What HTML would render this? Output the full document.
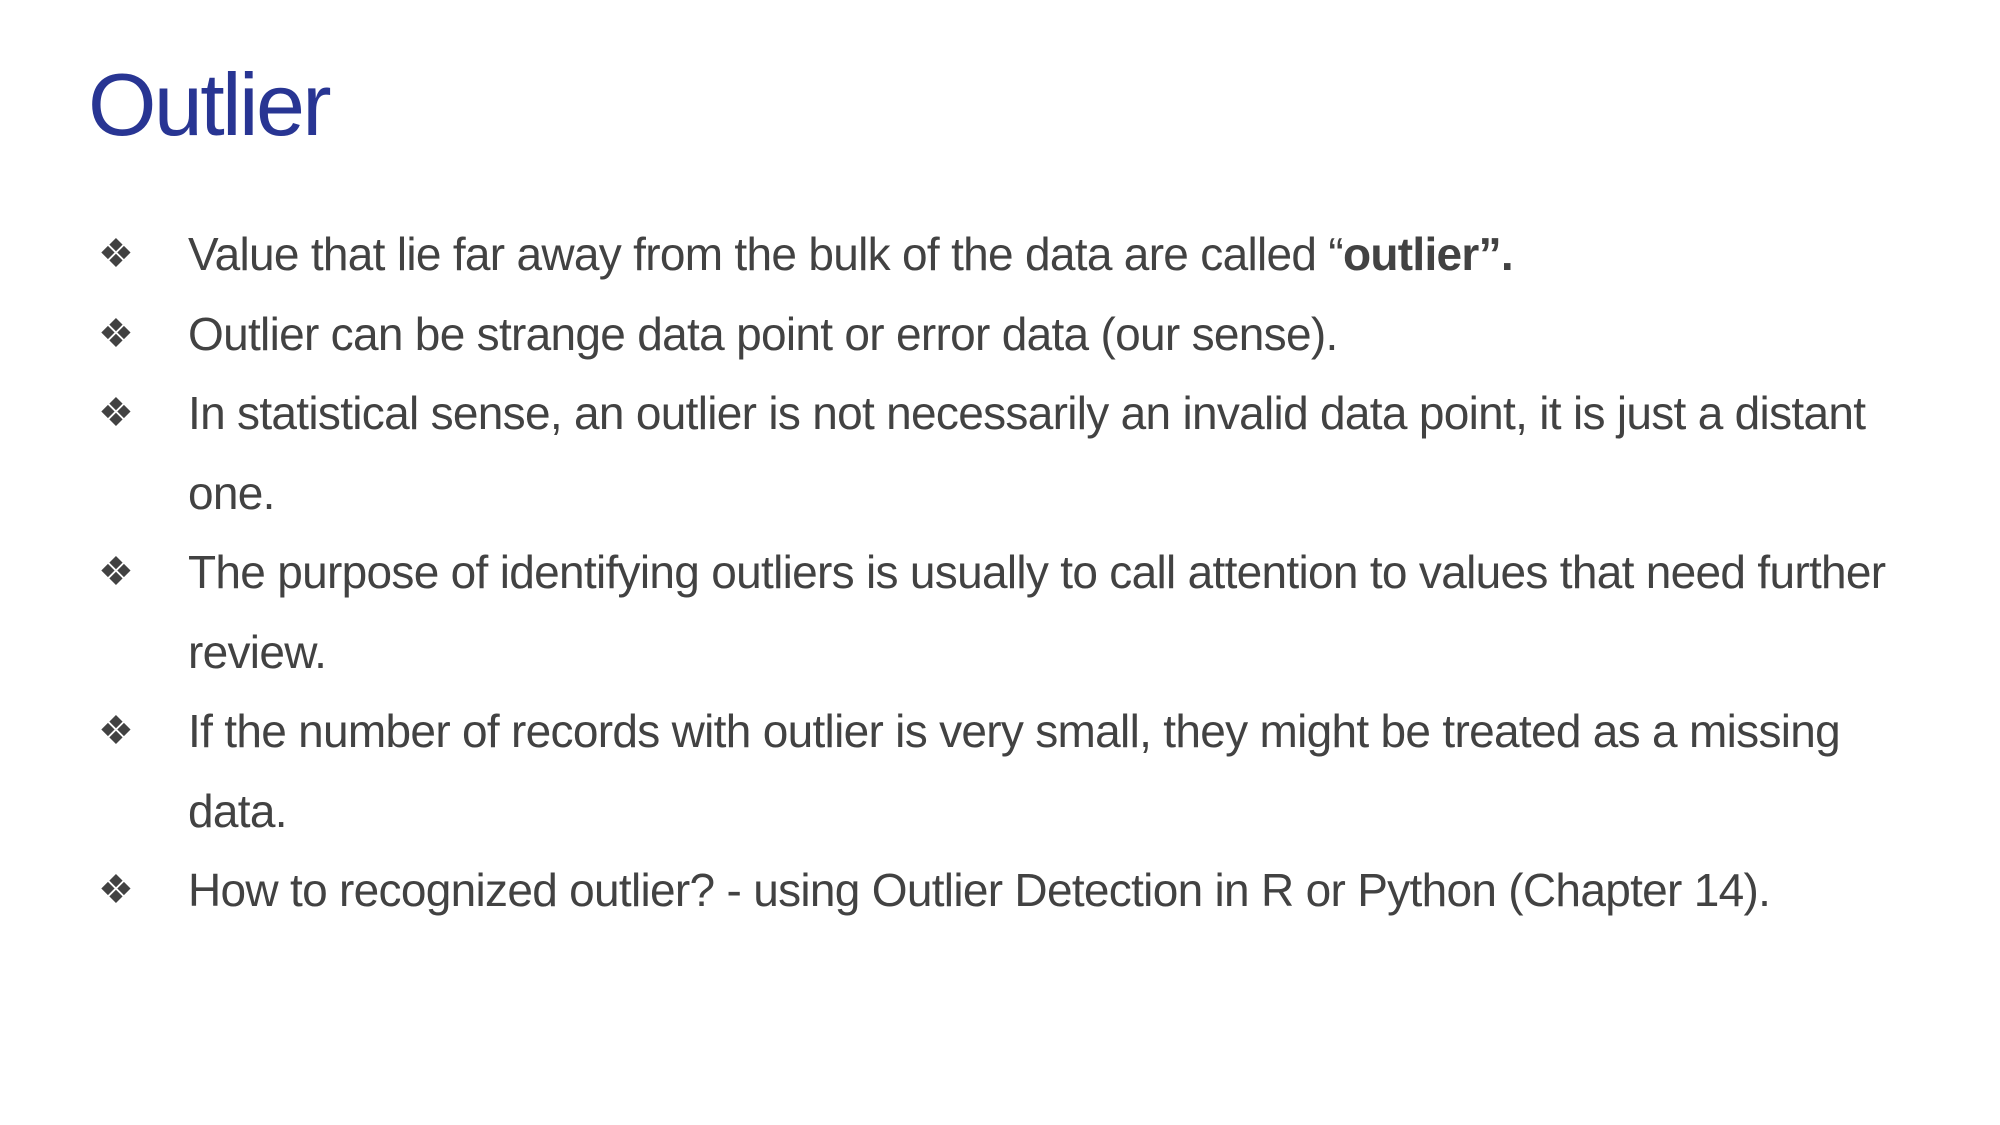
<!DOCTYPE html>
<html><head><meta charset="utf-8"><style>
html,body{margin:0;padding:0;background:#fff;width:2000px;height:1125px;overflow:hidden}
body{position:relative;font-family:"Liberation Sans",Arial,sans-serif}
h1{position:absolute;left:88px;top:55px;margin:0;font-weight:normal;font-size:88px;color:#283593;line-height:100px;letter-spacing:-2.6px}
.l{position:absolute;left:188px;font-size:46px;color:#424242;white-space:nowrap;line-height:60px;letter-spacing:-0.7px}
.b{position:absolute;left:98px;font-size:40px;color:#424242;line-height:60px}
</style></head><body>
<h1>Outlier</h1>
<div class="b" style="top:224px">❖</div><div class="l" style="top:224px">Value that lie far away from the bulk of the data are called “<b>outlier”.</b></div>
<div class="b" style="top:304px">❖</div><div class="l" style="top:304px">Outlier can be strange data point or error data (our sense).</div>
<div class="b" style="top:383px">❖</div><div class="l" style="top:383px">In statistical sense, an outlier is not necessarily an invalid data point, it is just a distant</div>
<div class="l" style="top:463px">one.</div>
<div class="b" style="top:542px">❖</div><div class="l" style="top:542px">The purpose of identifying outliers is usually to call attention to values that need further</div>
<div class="l" style="top:622px">review.</div>
<div class="b" style="top:701px">❖</div><div class="l" style="top:701px">If the number of records with outlier is very small, they might be treated as a missing</div>
<div class="l" style="top:781px">data.</div>
<div class="b" style="top:860px">❖</div><div class="l" style="top:860px">How to recognized outlier? - using Outlier Detection in R or Python (Chapter 14).</div>
</body></html>
